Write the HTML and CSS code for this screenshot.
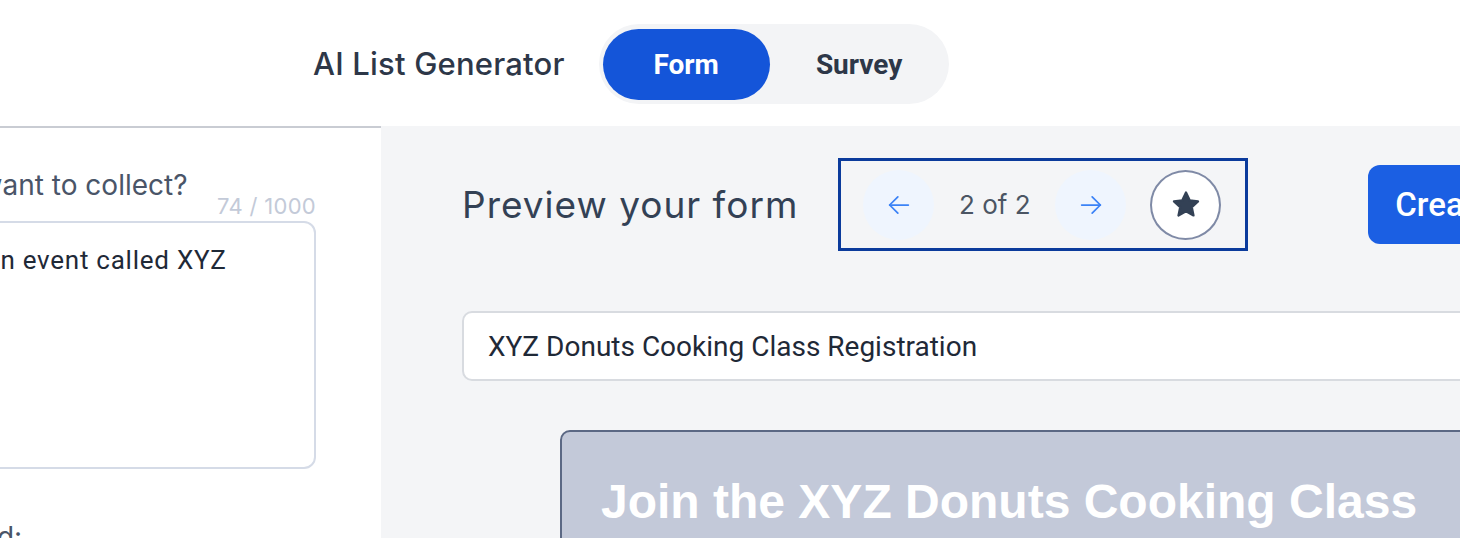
FILE: index.html
```html
<!DOCTYPE html>
<html lang="en">
<head>
    <meta charset="utf-8">
    <title>AI List Generator</title>
    <link rel="stylesheet" href="styles.css">
</head>
<body>
    <header class="topbar">
        <h1 class="app-title">AI List Generator</h1>
        <div class="mode-toggle">
            <button class="mode-btn active">Form</button>
            <button class="mode-btn">Survey</button>
        </div>
    </header>

    <main class="workspace">
        <aside class="sidebar">
            <div class="sidebar-inner">
                <label class="field-label" for="prompt-input">Which information do you want to collect?</label>
                <div class="char-count">74 / 1000</div>
                <textarea id="prompt-input" class="prompt-input">Add a registration form for an event called XYZ Donuts</textarea>
                <label class="field-label field-next">Pick the fields to be included:</label>
            </div>
        </aside>

        <section class="preview">
            <div class="preview-head">
                <h2 class="preview-title">Preview your form</h2>
                <div class="pager">
                    <button class="pager-btn" aria-label="Previous">
                        <svg width="28" height="28" viewBox="0 0 24 24" fill="none" stroke="currentColor" stroke-width="1.5" stroke-linecap="round" stroke-linejoin="round"><path d="M20 12H4"/><path d="M11 5l-7 7 7 7"/></svg>
                    </button>
                    <span class="pager-count">2 of 2</span>
                    <button class="pager-btn" aria-label="Next">
                        <svg width="28" height="28" viewBox="0 0 24 24" fill="none" stroke="currentColor" stroke-width="1.5" stroke-linecap="round" stroke-linejoin="round"><path d="M4 12h16"/><path d="M13 5l7 7-7 7"/></svg>
                    </button>
                    <button class="fav-btn" aria-label="Favorite">
                        <svg width="34" height="34" viewBox="0 0 24 24"><path d="M12 3.2l2.6 5.5 5.9.7-4.4 4.1 1.2 5.9L12 16.5l-5.3 2.9 1.2-5.9-4.4-4.1 5.9-.7z" fill="currentColor" stroke="currentColor" stroke-width="1.6" stroke-linejoin="round"/></svg>
                    </button>
                </div>
                <button class="create-btn">Create form</button>
            </div>

            <input class="form-name" type="text" value="XYZ Donuts Cooking Class Registration">

            <div class="form-card">
                <h3 class="form-card-title">Join the XYZ Donuts Cooking Class</h3>
            </div>
        </section>
    </main>
</body>
</html>
```
FILE: styles.css
```css
/* --- base --- */
html, body { margin: 0; height: 100%; overflow: hidden; }
body {
    background: #ffffff;
    color: #2d3748;
    font-family: Inter, "Noto Sans", sans-serif;
}
button { font-family: inherit; cursor: pointer; }

/* --- top bar --- */
.topbar {
    height: 126px;
    display: flex;
    align-items: center;
    gap: 34px;
    padding-left: 313px;
    box-sizing: border-box;
}
.app-title { margin: 0; font-size: 31px; font-weight: 500; color: #2d3748; letter-spacing: 0.2px; }
.mode-toggle {
    display: flex;
    align-items: center;
    height: 80px;
    width: 350px;
    box-sizing: border-box;
    padding: 0 0 0 4px;
    margin-top: 2px;
    background: #f3f4f6;
    border-radius: 40px;
}
.mode-btn {
    flex: none;
    border: none;
    background: none;
    height: 71px;
    width: 167px;
    border-radius: 36px;
    font-family: Roboto, sans-serif;
    font-size: 28px;
    font-weight: 700;
    color: #2d3748;
}
.mode-btn + .mode-btn { width: 179px; }
.mode-btn.active { background: #1455d9; color: #ffffff; }

/* --- workspace --- */
.workspace { display: flex; height: calc(100% - 126px); }

.sidebar {
    flex: none;
    width: 381px;
    border-top: 2px solid #c9ccd3;
    background: #ffffff;
    overflow: hidden;
    display: flex;
    justify-content: flex-end;
}
.sidebar-inner { flex: none; width: 749px; padding: 41px 65px 0 0; box-sizing: border-box; }
.field-label {
    display: block;
    font-size: 28px;
    line-height: 32px;
    color: #4a5568;
    white-space: nowrap;
}
.char-count {
    text-align: right;
    font-size: 22px;
    line-height: 22px;
    letter-spacing: 0.3px;
    color: #c3cad8;
    margin-top: -6px;
}
.prompt-input {
    display: block;
    width: 100%;
    height: 248px;
    margin-top: 4px;
    box-sizing: border-box;
    padding: 20px 24px 17px 18px;
    border: 2px solid #d5dbe7;
    border-radius: 12px;
    resize: none;
    font-family: Roboto, sans-serif;
    font-size: 26px;
    line-height: 34px;
    letter-spacing: 0.75px;
    color: #1f2937;
    background: #ffffff;
}
.field-next { margin-top: 52px; }

/* --- preview --- */
.preview {
    flex: none;
    width: 1400px;
    background: #f4f5f7;
    padding: 32px 0 0 81px;
    box-sizing: border-box;
}
.preview-head { display: flex; align-items: center; }
.preview-head > * { flex: none; }
.preview-title {
    margin: 0;
    font-size: 37px;
    font-weight: 400;
    letter-spacing: 1px;
    color: #334155;
    white-space: nowrap;
}
.pager {
    display: flex;
    align-items: center;
    gap: 24px;
    height: 93px;
    box-sizing: border-box;
    margin-left: 40px;
    padding: 0 24px 0 22px;
    border: 3px solid #0b3b9c;
}
.pager-btn {
    width: 71px;
    height: 70px;
    border: none;
    border-radius: 50%;
    background: #eff5fe;
    color: #3b82f6;
    display: flex;
    align-items: center;
    justify-content: center;
}
.pager-count { font-size: 26px; color: #4b5563; width: 73px; text-align: center; white-space: nowrap; }
.fav-btn {
    width: 71px;
    height: 70px;
    border: 2px solid #7f8aa6;
    border-radius: 50%;
    background: #ffffff;
    color: #334155;
    display: flex;
    align-items: center;
    justify-content: center;
}
.create-btn {
    margin-left: 120px;
    height: 79px;
    padding: 0 27px;
    border: none;
    border-radius: 12px;
    background: #1b5fe3;
    color: #ffffff;
    font-family: Roboto, sans-serif;
    font-size: 33px;
    font-weight: 500;
    white-space: nowrap;
}

.form-name {
    display: block;
    width: 1080px;
    height: 70px;
    margin-top: 60px;
    box-sizing: border-box;
    padding: 0 24px;
    border: 2px solid #d8dbe0;
    border-radius: 10px;
    background: #ffffff;
    font-family: Roboto, sans-serif;
    font-size: 28px;
    color: #1f2937;
}

.form-card {
    margin: 49px 0 0 98px;
    height: 300px;
    background: #c3c9d9;
    border: 2px solid #5b6884;
    border-radius: 10px;
    padding: 42px 0 0 39px;
    box-sizing: border-box;
}
.form-card-title {
    margin: 0;
    font-family: "Liberation Sans", Arial, sans-serif;
    font-size: 48px;
    line-height: 56px;
    font-weight: 700;
    color: #ffffff;
}
```
